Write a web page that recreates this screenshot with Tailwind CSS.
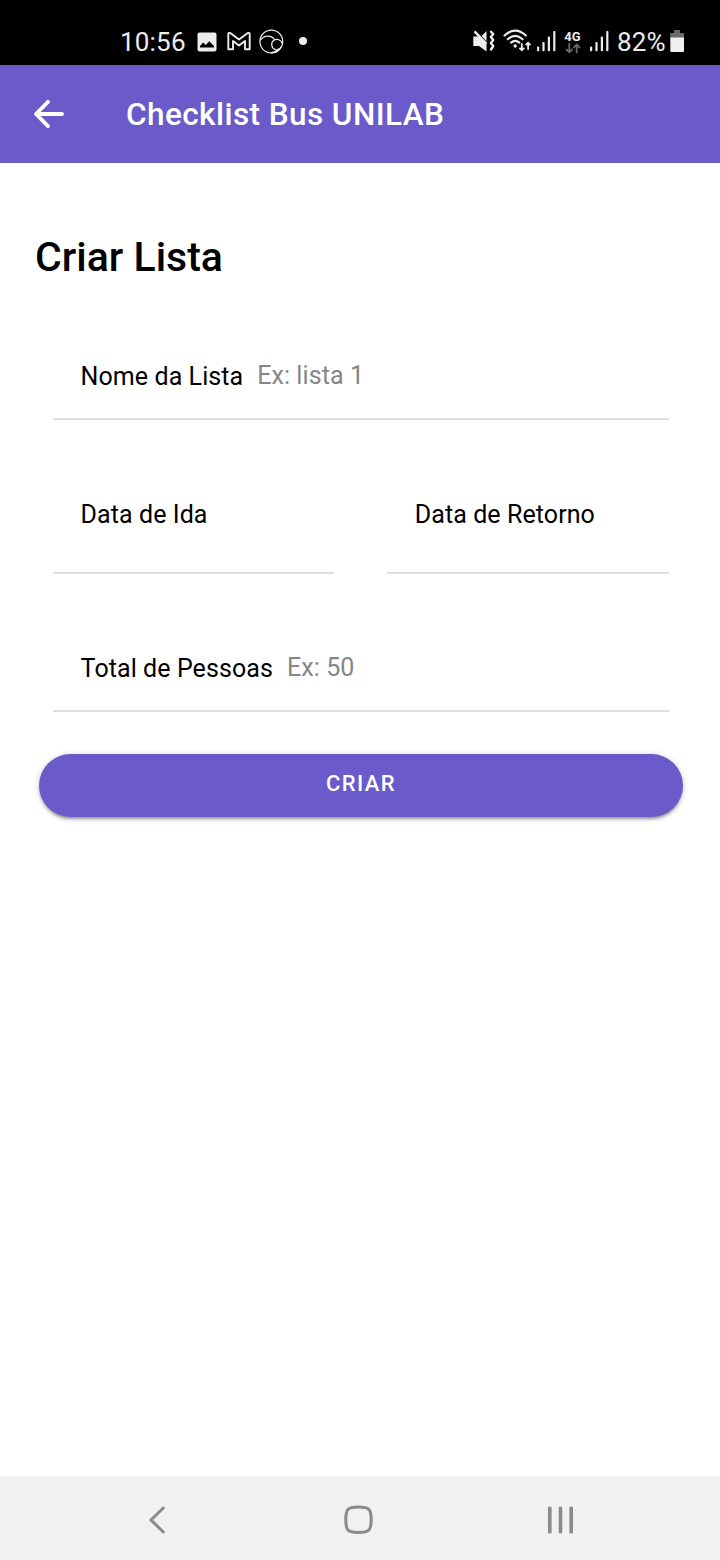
<!DOCTYPE html>
<html lang="pt-BR">
<head>
<meta charset="utf-8">
<title>Checklist Bus UNILAB</title>
<script src="https://cdn.jsdelivr.net/npm/@tailwindcss/browser@4"></script>
</head>
<body class="w-[720px] h-[1560px] flex flex-col bg-white overflow-hidden font-[Roboto,sans-serif] text-black">
<!-- Status bar -->
<div class="h-[65px] shrink-0 bg-black flex pt-[19px] text-[#ececec]">
  <div class="h-11 w-full flex items-center pl-[120px] pr-[35px]">
    <span class="w-[66px] pt-[2px] text-[26px] leading-[44px] tracking-[0.2px] whitespace-nowrap">10:56</span>
    <svg class="ml-[11px] mt-[2px] shrink-0" width="20" height="20" viewBox="0 0 20 20"><rect x="0.5" y="0.5" width="19" height="19" rx="2" fill="#ececec"/><path d="M3 15.5V14L6.2 10.5L8.8 13L12.2 9.3L17 14V15.5Z" fill="#000"/></svg>
    <svg class="ml-[10px] shrink-0" width="24" height="20" viewBox="0 0 24 20" fill="none" stroke="#ececec" stroke-width="1.9" stroke-linejoin="round"><path d="M1.3 18.2V3.2Q1.3 1.2 3.6 2.2L12 8.6L20.4 2.2Q22.7 1.2 22.7 3.2V18.2H18V10L12 14.6L6 10V18.2Z"/></svg>
    <svg class="ml-[8px] shrink-0" width="25" height="25" viewBox="0 0 25 25" fill="none" stroke="#ececec" stroke-width="1.2"><circle cx="12.3" cy="12.5" r="11.4"/><path d="M1.2 11.5C5 5.5 13 6 15.6 11"/><path d="M23.2 14.5C22 10.5 18 9.5 15 11.3C11.5 13.5 12 19.5 16.5 20.6C19.3 21.2 21.5 19.8 22.4 17.6"/><path d="M12.5 23.6Q16.5 23 19 20.6L20.5 20.2Q17.5 24 12.5 23.8Z" fill="#ececec"/></svg>
    <span class="ml-[15px] size-2 rounded-full bg-[#ececec] shrink-0"></span>
    <span class="grow"></span>
    <svg class="shrink-0" width="22" height="24" viewBox="0 0 22 24" fill="none" stroke="#ececec"><path d="M0.3 7.5H5.5L13.5 15V22.5L6 17H0.3Z" fill="#ececec" stroke="none"/><path d="M13.5 2V12.2L8.6 7Z" fill="#ececec" stroke="none"/><path d="M1.5 2.3L13.5 14.8" stroke-width="2.4"/><path d="M18 2.8L20.3 5L17.8 8L20.3 11L17.8 14L20.3 17L18 20.5" stroke-width="2.3" stroke-linejoin="round" stroke-linecap="round"/></svg>
    <svg class="ml-[8px] shrink-0" width="28" height="24" viewBox="0 0 28 24" fill="none" stroke="#ececec" stroke-width="2.1" stroke-linecap="round"><path d="M1.5 6.5Q12.2 -3.3 22.9 6.5M4.8 10.2Q12.2 3.6 19.6 10.2M8 13.6Q12.2 10 16.4 13.6"/><circle cx="12.2" cy="17" r="1.7" fill="#ececec" stroke="none"/><path d="M18.8 14.3V21M16.4 18.8L18.8 21.2L21.2 18.8M25.1 20.7V14M22.7 16.2L25.1 13.8L27.5 16.2" stroke-width="1.8" stroke-linecap="butt"/></svg>
    <svg class="ml-[6px] shrink-0" width="19" height="22" viewBox="0 0 19 22" fill="#ececec"><rect x="0" y="16.5" width="2.2" height="4.8" rx=".8"/><rect x="5.4" y="12" width="2.2" height="9.3" rx=".8"/><rect x="10.8" y="6.5" width="2.2" height="14.8" rx=".8"/><rect x="16.2" y="1" width="2.2" height="20.3" rx=".8"/></svg>
    <div class="ml-[8px] w-[17px] pt-px flex flex-col items-center shrink-0">
      <span class="text-[13px] leading-[13px] font-bold">4G</span>
      <svg width="16" height="11" viewBox="0 0 16 11" fill="none" stroke="#686868" stroke-width="1.8"><path d="M4.3 0V9M1 6L4.3 9.3L7.6 6M11.7 10.3V2M8.4 4.8L11.7 1.5L15 4.8"/></svg>
    </div>
    <svg class="ml-[9px] shrink-0" width="19" height="22" viewBox="0 0 19 22" fill="#ececec"><rect x="0" y="16.5" width="2.2" height="4.8" rx=".8"/><rect x="5.4" y="12" width="2.2" height="9.3" rx=".8"/><rect x="10.8" y="6.5" width="2.2" height="14.8" rx=".8"/><rect x="16.2" y="1" width="2.2" height="20.3" rx=".8"/></svg>
    <span class="ml-[8px] w-[49px] pt-[2px] text-[26px] leading-[44px] tracking-[0.2px] whitespace-nowrap shrink-0">82%</span>
    <svg class="ml-[4px] shrink-0" width="15" height="22" viewBox="0 0 15 22"><path d="M0.3 3H4V0H10V3H14V8H0.3Z" fill="#6a6a6a"/><path d="M0.3 7.5H14V21Q14 22 13 22H1.3Q0.3 22 0.3 21Z" fill="#f0f0f0"/></svg>
  </div>
</div>
<!-- App bar -->
<header class="h-[98px] shrink-0 bg-[#6a5aca] text-white flex items-center pl-[33px]">
  <svg class="shrink-0" width="32" height="30" viewBox="0 0 32 30" fill="none" stroke="#fff" stroke-width="3.8" stroke-linecap="round" stroke-linejoin="round"><path d="M15 2.8L3 15L15 27.2M3 15H29"/></svg>
  <h1 class="ml-[61px] pt-[2px] text-[31.5px] leading-[40px] font-medium tracking-[0.43px] whitespace-nowrap">Checklist Bus UNILAB</h1>
</header>
<!-- Form -->
<main class="grow px-[35px] pt-[70px]">
  <h2 class="h-12 text-[41px] leading-[48px] font-medium whitespace-nowrap">Criar Lista</h2>
  <div class="mt-[51px] ml-[18px] w-[616px] h-[88px] border-b-2 border-[#dedede] pl-[27.6px] flex pt-[25px] text-[25px] leading-[40px] tracking-[0.08px] whitespace-nowrap">
    <label class="w-[176.6px]">Nome da Lista</label><span class="text-[#868686] -mt-px">Ex: lista 1</span>
  </div>
  <div class="ml-[18px] w-[616px] flex justify-between text-[25px] leading-[40px] tracking-[0.08px] whitespace-nowrap">
    <div class="w-[281px] h-[154px] border-b-2 border-[#dedede] pl-[27.6px] pt-[75px]">Data de Ida</div>
    <div class="w-[282px] h-[154px] border-b-2 border-[#dedede] pl-[27.8px] pt-[75px]">Data de Retorno</div>
  </div>
  <div class="ml-[18px] w-[616px] h-[138px] border-b-2 border-[#dedede] pl-[27.6px] flex pt-[75px] text-[25px] leading-[40px] tracking-[0.08px] whitespace-nowrap">
    <label class="w-[206.4px]">Total de Pessoas</label><span class="text-[#868686] -mt-px">Ex: 50</span>
  </div>
  <button class="block mt-[42px] ml-[4px] w-[644px] h-[63px] rounded-full bg-[#6a5aca] text-white text-[22px] leading-[59px] pb-1 font-medium tracking-[1.4px] shadow-[0_3px_3px_-1px_rgba(0,0,0,0.32),0_1px_6px_rgba(0,0,0,0.2)]">CRIAR</button>
</main>
<!-- System navigation -->
<nav class="h-[84px] shrink-0 bg-[#f1f1f1] flex items-center pt-[3px] pl-[148px]">
  <svg width="18" height="28" viewBox="0 0 18 28" fill="none" stroke="#8b8b8b" stroke-width="3" stroke-linecap="round"><path d="M15.3 2L3 14L15.3 26" stroke-linejoin="miter"/></svg>
  <svg class="ml-[178px]" width="30" height="30" viewBox="0 0 30 30" fill="none" stroke="#8b8b8b" stroke-width="3"><path d="M14.4 2C25 2 27.2 4 27.2 14.7S25 27.4 14.4 27.4S1.8 25.5 1.8 14.7S4 2 14.4 2Z"/></svg>
  <svg class="ml-[173px]" width="28" height="28" viewBox="0 0 28 28" fill="#8b8b8b"><rect x="1" y="0.6" width="3.6" height="26.8" rx="1.5"/><rect x="11.7" y="0.6" width="3.6" height="26.8" rx="1.5"/><rect x="22.4" y="0.6" width="3.6" height="26.8" rx="1.5"/></svg>
</nav>
</body>
</html>
